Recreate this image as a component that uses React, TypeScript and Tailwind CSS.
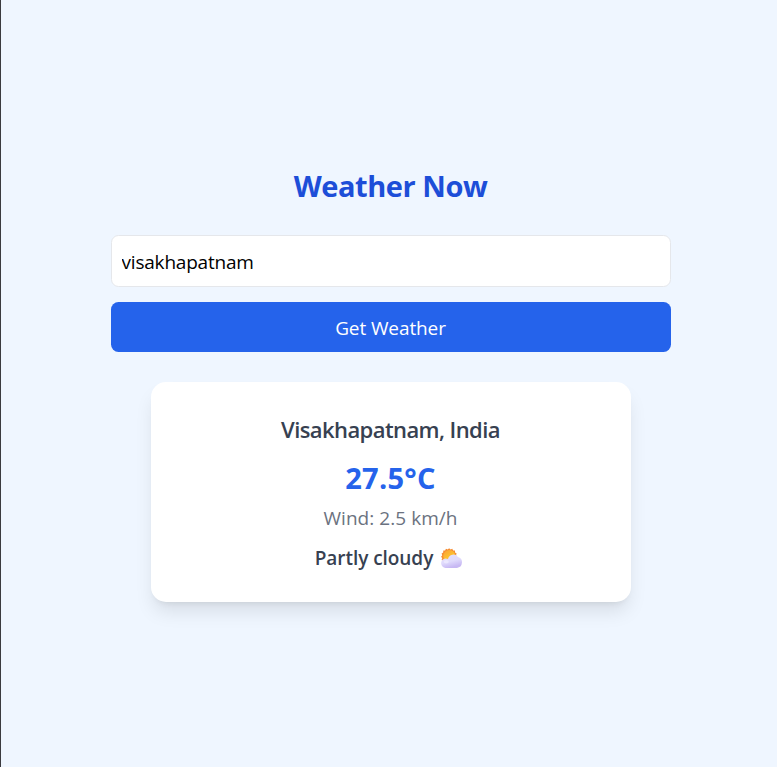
import { useState } from "react";

function PartlyCloudy() {
  return (
    <svg className="ml-[8px] h-[20px] w-[21px] shrink-0" viewBox="0 0 22 20" preserveAspectRatio="none" role="img" aria-label="Partly cloudy">
      <defs>
        <linearGradient id="sun" x1="0" y1="0" x2="0.6" y2="1">
          <stop offset="0" stopColor="#f9a03a" />
          <stop offset="0.6" stopColor="#fdc02f" />
          <stop offset="1" stopColor="#f9a43c" />
        </linearGradient>
        <linearGradient id="cloud" x1="0" y1="0" x2="0.4" y2="1">
          <stop offset="0" stopColor="#e6e0fc" />
          <stop offset="0.6" stopColor="#dfdafc" />
          <stop offset="1" stopColor="#c7b8f3" />
        </linearGradient>
      </defs>
      <path
        d="M8.5 .3l1.5 1.2 1.8-.7.9 1.7 1.9.1.1 1.9 1.7.9-.7 1.8 1.2 1.5-1.2 1.5.7 1.8-1.7.9-.1 1.9-1.9.1-.9 1.7-1.8-.7-1.5 1.2L7 15.9l-1.8.7-.9-1.7-1.9-.1-.1-1.9-1.7-.9.7-1.8L.1 8.7l1.2-1.5-.7-1.8 1.7-.9.1-1.9 1.9-.1.9-1.7 1.8.7z"
        fill="#f58c32"
      />
      <circle cx="8.7" cy="8.3" r="6.3" fill="url(#sun)" />
      <path d="M4.9 19.9a4.7 4.7 0 0 1-.2-9.4c1.2 0 1.9.2 2.6.6A5.9 5.9 0 0 1 17.8 8.9a5.6 5.6 0 0 1-1.1 11z" fill="url(#cloud)" />
      <ellipse cx="5.5" cy="13.7" rx="2.7" ry="1.8" fill="#f0edff" opacity=".7" />
    </svg>
  );
}

export default function App() {
  const [city, setCity] = useState("visakhapatnam");
  return (
    <main className="flex h-[767px] flex-col items-center border-l border-[#3b3b3f] bg-[#eff6ff] pt-[162px] pl-[3px] font-['Open_Sans','Noto_Sans',sans-serif]">
      <h1 className="h-[50px] text-[29px] leading-[47px] font-bold tracking-[-0.45px] whitespace-nowrap text-[#1d4ed8]">Weather Now</h1>
      <input
        aria-label="City"
        className="mt-[23px] h-[52px] w-[560px] rounded-[7.5px] border border-[#e5e7eb] bg-white px-[10px] pt-[2px] text-[19px] tracking-[-0.2px] text-black outline-none"
        value={city}
        onChange={(e) => setCity(e.target.value)}
      />
      <button className="mt-[15px] h-[50px] w-[560px] rounded-[7.5px] bg-[#2563eb] pt-[2px] text-[19px] tracking-[-0.1px] text-white">Get Weather</button>
      <section className="mt-[30px] flex h-[220px] w-[480px] flex-col items-center rounded-[15px] bg-white pt-[30px] whitespace-nowrap shadow-[0_12.5px_18.75px_-3.75px_rgba(0,0,0,0.1),0_5px_7.5px_-5px_rgba(0,0,0,0.1)]">
        <h2 className="h-[35px] text-[22px] leading-[34px] font-semibold tracking-[-0.58px] text-[#374151]">Visakhapatnam, India</h2>
        <p className="mt-[10px] h-[45px] text-[29px] leading-[42px] font-bold tracking-[0.3px] text-[#2563eb]">27.5°C</p>
        <p className="h-[30px] text-[19px] leading-[32px] tracking-[0.05px] text-[#6b7280]">Wind: 2.5 km/h</p>
        <p className="mt-[11px] mr-[4px] flex h-[30px] items-center text-[19px] leading-[30px] font-semibold tracking-[-0.05px] text-[#374151]">
          Partly cloudy
          <PartlyCloudy />
        </p>
      </section>
    </main>
  );
}
